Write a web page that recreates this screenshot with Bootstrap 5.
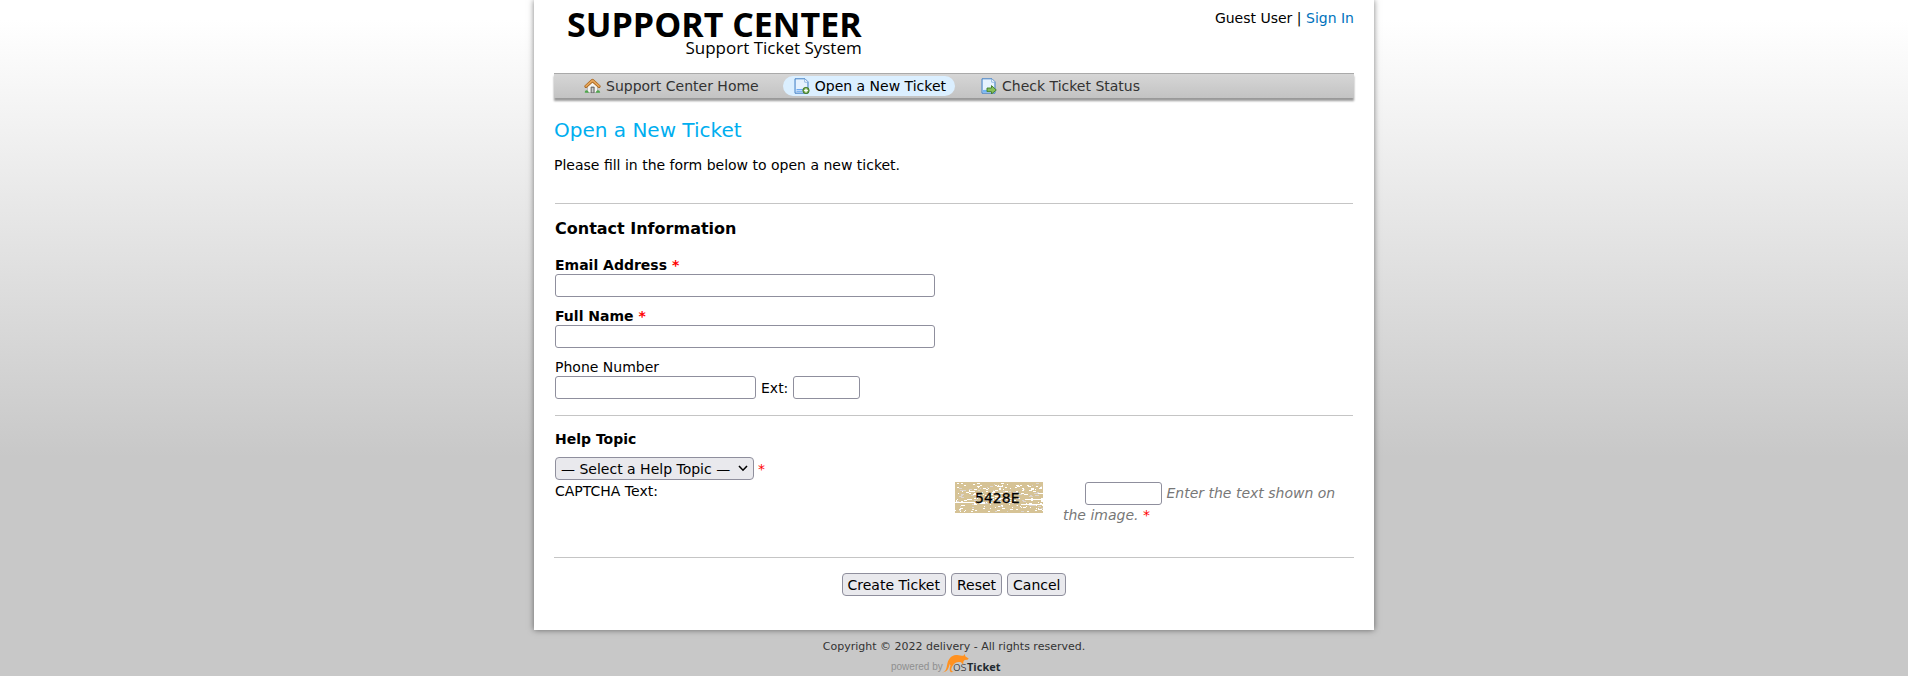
<!DOCTYPE html>
<html lang="en">
<head>
<meta charset="utf-8">
<meta name="viewport" content="width=device-width, initial-scale=1">
<title>Support Center - Open a New Ticket</title>
<link href="https://cdn.jsdelivr.net/npm/bootstrap@5.3.0/dist/css/bootstrap.min.css" rel="stylesheet">
<style>
  body {
    font: 14px/20px "DejaVu Sans", Verdana, sans-serif;
    color: #000;
    background: #c8c8c8 linear-gradient(#fff 20px, #c8c8c8 457px) no-repeat;
  }
  a { color: #0072bc; text-decoration: none; }
  .page-sheet { max-width: 840px; background: #fff; box-shadow: 0 0 6px rgba(0, 0, 0, .5); padding: 0 20px 34px; }
  .site-header { height: 73px; padding-top: 8px; }
  .brand { font-family: "Open Sans", sans-serif; color: #000; margin: 0 0 0 13px; }
  .brand-name { font-size: 34px; line-height: 33px; font-weight: 700; }
  .brand-tag { font-size: 17px; line-height: 14px; }
  .site-nav { height: 25px; border-top: 1px solid #aaa; background: linear-gradient(#d6d6d6, #c3c3c3); box-shadow: 0 3px 2px rgba(0, 0, 0, .4); padding: 0 19px; gap: 15px; }
  .site-nav a { color: #333; height: 20px; border-radius: 20px; padding: 0 9px 0 11px; gap: 5px; }
  .site-nav a.active { color: #000; background: #dbefff; }
  h1 { font-size: 20px; line-height: 24px; color: #00aeef; margin: 20px 0 13px; }
  h2 { font-size: 16px; line-height: 20px; font-weight: 700; margin: 15px 0 18px; }
  .rule { border: 0; border-top: 1px solid #c5c5c5; opacity: 1; margin: 0; }
  .form-area { padding: 28px 1px 0; }
  .field { margin-bottom: 11px; }
  .field > label { display: block; line-height: 17px; }
  .box { height: 23px; border: 1px solid #8f8f9d; border-radius: 3px; background: #fff; padding: 1px 4px; }
  .box-wide { width: 380px; max-width: 100%; }
  .box-phone { width: 201px; }
  .box-ext { width: 67px; }
  .box-captcha { width: 77px; margin-left: 22px; }
  .phone-row { gap: 5px; }
  .topic-label { margin-top: 13px; }
  .topic { width: 199px; height: 23px; border: 1px solid #8f8f9d; border-radius: 4px; color: #000; padding: 0 5px;
    appearance: none; background: #e9e9ed url("data:image/svg+xml,%3Csvg xmlns='http://www.w3.org/2000/svg' width='10' height='7'%3E%3Cpath d='M1 1 5 5.200 9 1' fill='none' stroke='%23000' stroke-width='1.6'/%3E%3C/svg%3E") no-repeat right 5px center; }
  .actions { gap: 5px; padding-top: 15px; }
  .action { height: 23px; line-height: 20px; border: 1px solid #8f8f9d; border-radius: 4px; background: #e9e9ed; color: #000; padding: 0 5px; }
  .required { color: #f00; }
  .hint { color: #777; }
  .captcha-row { min-height: 77px; padding-top: 1px; }
  .captcha-entry { gap: 20px; padding: 1px 0 0 1px; }
  footer { font-size: 11px; line-height: 14px; color: #333; padding-top: 10px; }
</style>
</head>
<body>
<div class="page-sheet mx-auto">
  <header class="site-header d-flex justify-content-between align-items-start">
    <a class="brand d-flex flex-column align-items-end" href="#">
      <span class="brand-name">SUPPORT CENTER</span>
      <span class="brand-tag">Support Ticket System</span>
    </a>
    <div>Guest User | <a href="#">Sign In</a></div>
  </header>

  <nav class="site-nav d-flex align-items-center">
    <a class="d-flex align-items-center" href="#">
      <svg width="17" height="16" viewBox="0 0 16 16" aria-hidden="true">
        <path d="M3 8 8 3.500 13 8v6.500H3z" fill="#f4f4f2" stroke="#a9a9a9" stroke-width=".7"/>
        <path d="M6.500 9h3.200v5.600H6.500z" fill="#8b8b8b" stroke="#5e5e5e" stroke-width=".7"/>
        <path d="M7.300 10h1.500v4.300H7.300z" fill="#c8c8c8"/>
        <path d="M.3 14.700c0-2 1.200-2.800 2.200-2.200 1 .3 1.600 1.200 1.900 2.200zM11.300 14.700c.2-1.400 1-2.500 2.200-2.400 1.500.2 2 1.300 2.200 2.400z" fill="#4fa64c"/>
        <path d="M1.500 8.400 8 2.500l6.500 5.900" fill="none" stroke="#a8641c" stroke-width="3.200" stroke-linecap="round" stroke-linejoin="round"/>
        <path d="M1.600 8.200 8 2.400l6.400 5.800" fill="none" stroke="#e5a65c" stroke-width="1.800" stroke-linecap="round" stroke-linejoin="round"/>
      </svg>
      Support Center Home
    </a>
    <a class="active d-flex align-items-center" href="#">
      <svg width="16" height="16" viewBox="0 0 16 16" aria-hidden="true">
        <path d="M1 .8h10l3 3v11.400H1z" fill="#cfe4fa" stroke="#4580c4"/>
        <path d="M2 1.800h8.500L13 4.500v5L2 12z" fill="#e6f2fe"/>
        <path d="M10.700 1v3.200H14" fill="#fff" stroke="#6b9dd6" stroke-width=".7"/>
        <path d="M2.500 11.500h7M2.500 13.300h6" stroke="#6eaaf0"/>
        <circle cx="12" cy="12.500" r="3.200" fill="#69a243" stroke="#3f7526" stroke-width=".8"/>
        <path d="M12 10.600v3.800M10.100 12.500h3.800" stroke="#fff" stroke-width="1.300"/>
      </svg>
      Open a New Ticket
    </a>
    <a class="d-flex align-items-center" href="#">
      <svg width="16" height="16" viewBox="0 0 16 16" aria-hidden="true">
        <path d="M1 .8h10l3 3v11.400H1z" fill="#cfe4fa" stroke="#4580c4"/>
        <path d="M2 1.800h8.500L13 4.500v5L2 12z" fill="#e6f2fe"/>
        <path d="M10.700 1v3.200H14" fill="#fff" stroke="#6b9dd6" stroke-width=".7"/>
        <path d="M2 12h4v2.500H2z" fill="#72b5f5"/>
        <path d="M6 10h4.500V7.600L15.300 12l-4.800 4v-2.400H6z" fill="#86bf57" stroke="#3f7d28" stroke-width=".9"/>
      </svg>
      Check Ticket Status
    </a>
  </nav>

  <main>
    <h1 class="fw-normal">Open a New Ticket</h1>
    <p class="mb-0">Please fill in the form below to open a new ticket.</p>

    <form onsubmit="return false">
      <div class="form-area">
        <hr class="rule">
        <h2>Contact Information</h2>
        <div class="field">
          <label class="fw-bold" for="email">Email Address <span class="required">*</span></label>
          <input class="box box-wide d-block" type="email" id="email">
        </div>
        <div class="field">
          <label class="fw-bold" for="name">Full Name <span class="required">*</span></label>
          <input class="box box-wide d-block" type="text" id="name">
        </div>
        <div class="field">
          <label for="phone">Phone Number</label>
          <div class="phone-row d-flex align-items-center">
            <input class="box box-phone" type="tel" id="phone">
            <label for="ext">Ext:</label>
            <input class="box box-ext" type="text" id="ext">
          </div>
        </div>
        <hr class="rule mt-3">
        <label class="topic-label fw-bold d-block" for="topic">Help Topic</label>
        <div class="d-flex align-items-center gap-1 mt-2">
          <select class="topic" id="topic"><option>— Select a Help Topic —</option></select>
          <span class="required">*</span>
        </div>
        <div class="captcha-row row g-0">
          <div class="col-6"><label for="captcha">CAPTCHA Text:</label></div>
          <div class="captcha-entry col-6 d-flex align-items-start">
            <svg class="flex-shrink-0" width="88" height="31" viewBox="0 0 88 31" role="img" aria-label="Captcha image">
              <rect width="88" height="31" fill="#d6c396"/>
              <g id="noise" shape-rendering="crispEdges"></g>
              <text x="20" y="21" font-family="DejaVu Sans, sans-serif" font-size="14" stroke="#000" stroke-width=".3">5428E</text>
            </svg>
            <div>
              <input class="box box-captcha align-middle" type="text" id="captcha">
              <em class="hint">Enter the text shown on the image.</em> <span class="required">*</span>
            </div>
          </div>
        </div>
      </div>
      <hr class="rule">
      <div class="actions d-flex justify-content-center">
        <button class="action" type="submit">Create Ticket</button>
        <button class="action" type="reset">Reset</button>
        <button class="action" type="button">Cancel</button>
      </div>
    </form>
  </main>
</div>

<footer class="text-center">
  <div>Copyright © 2022 delivery - All rights reserved.</div>
  <a href="#" aria-label="powered by osTicket" class="d-block">
    <svg class="d-block mx-auto" width="126" height="20" viewBox="0 0 126 20">
      <text x="0" y="16" font-family="Liberation Sans, sans-serif" font-size="10" fill="#8f8f8f">powered by</text>
      <path d="M51 18.200c3.500 0 4.300-3 5-7C57 5 60 1.500 65 1c3-.3 5 .8 7.500.8L73.500 0l1 2.500 3.200 2-1.200 1.200-2.800.2c-1.500 1.300-1.700 2.200-1.200 3.800l-1 .2c-.8-1.500-1.500-2-3.500-2-3 0-5 1.500-6.500 4-1 2-1.700 3-.7 5l1.700 1-2.700.3c-1.700-1.500-1.300-4-.3-6.700l-.8-1.500c-1.200 5-3 8.700-7.700 8.200z" fill="#ff9120"/>
      <text x="62" y="17" font-family="Open Sans, sans-serif" font-size="13" font-weight="300" fill="#222">os</text>
      <text x="76" y="17" font-family="Liberation Sans Narrow, Open Sans, sans-serif" font-size="11" font-weight="700" fill="#222a30">Ticket</text>
    </svg>
  </a>
</footer>

<script src="https://cdn.jsdelivr.net/npm/bootstrap@5.3.0/dist/js/bootstrap.bundle.min.js"></script>
<script>
  // Speckle the captcha background with short horizontal dashes.
  let seed = 7;
  const rnd = n => (seed = (seed * 16807) % 2147483647) % n;
  let dashes = '';
  for (let i = 0; i < 250; i++) {
    const y = 1 + rnd(29);
    const w = y > 10 && y < 24 ? 1 + rnd(4) : 1 + rnd(3);
    dashes += `<rect x="${rnd(88)}" y="${y}" width="${w}" height="1" fill="${rnd(3) ? '#fff' : '#dcd5d0'}"/>`;
  }
  document.getElementById('noise').innerHTML = dashes +
    '<path d="M0 20h20v1H0zM66 22h22v1H66zM70 17h18v1H70z" fill="#fff"/>';
</script>
</body>
</html>
